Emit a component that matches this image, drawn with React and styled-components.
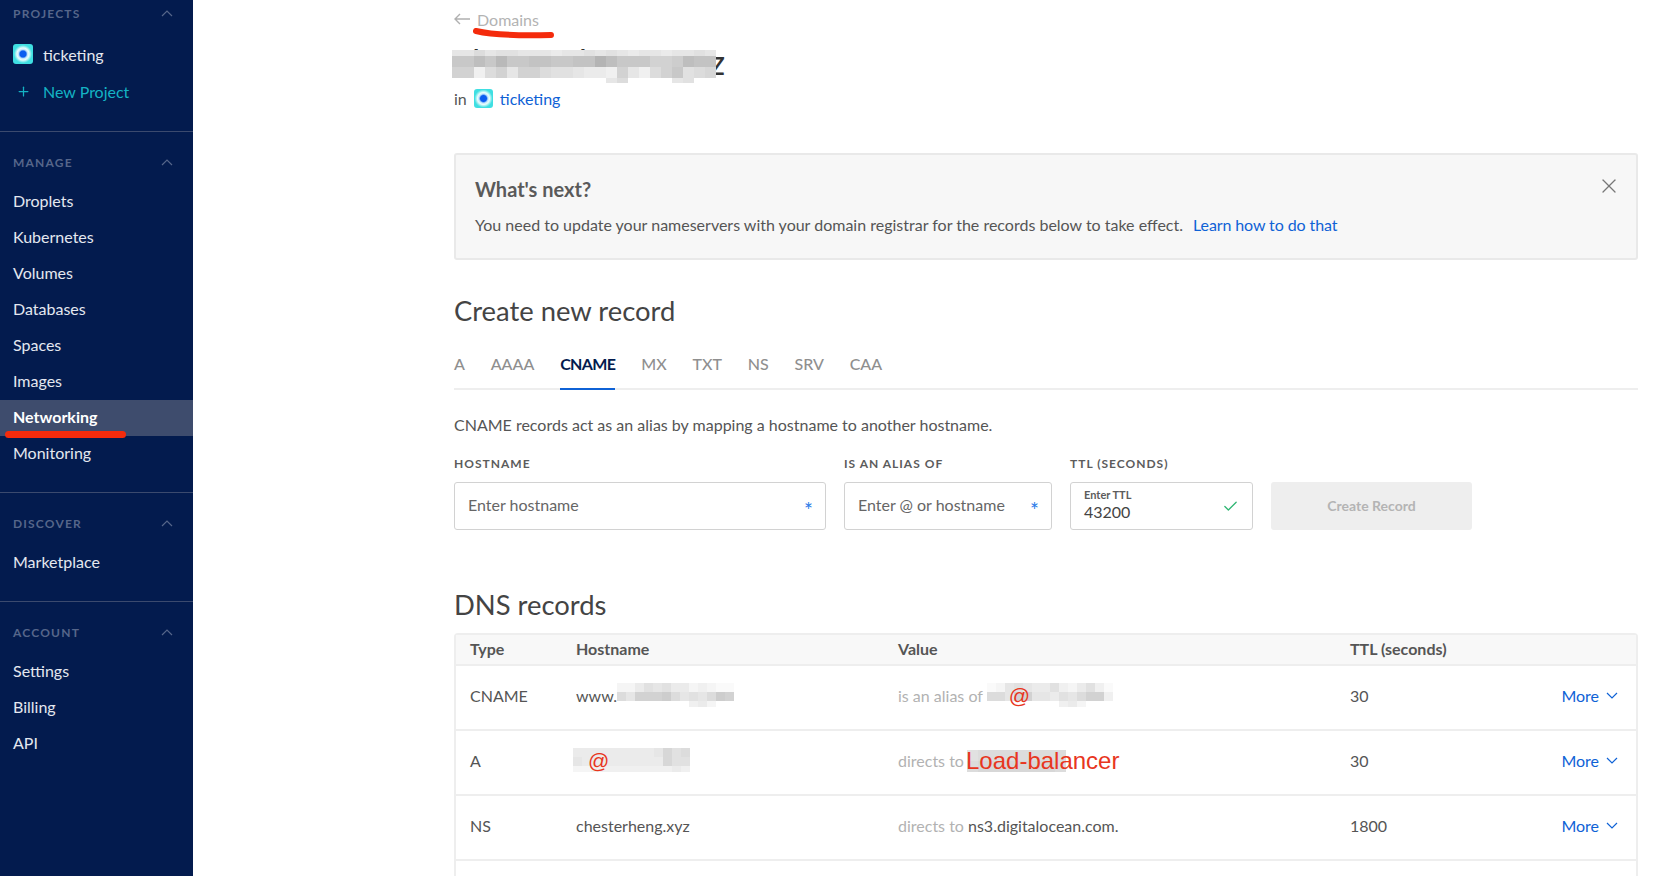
import React from 'react';
import styled, { createGlobalStyle } from 'styled-components';
import { Check, Plus, X } from 'lucide-react';

const GlobalStyle = createGlobalStyle`
html, body {
  margin: 0;
  height: 100%;
  overflow: hidden;
  background: #fff;
  font-family: Lato, "Open Sans", sans-serif;
}
* { box-sizing: border-box; }
`;

const Page = styled.div`
display: flex;
height: 876px;
overflow: hidden;
`;

const Sidebar = styled.aside`
width: 193px;
flex: none;
background: #031b4e;
color: #e4e8f0;
`;

const NavSection = styled.section`
padding: ${props => (props.first ? '0' : '16px')} 0 20px;
border-bottom: ${props => (props.last ? 'none' : '1px solid #3b4a6e')};
`;

const NavHeading = styled.div`
display: flex;
align-items: center;
justify-content: space-between;
height: ${props => (props.first ? '26px' : '28px')};
padding: 0 20px 0 13px;
margin-bottom: ${props => (props.first ? '12px' : '8px')};
font-size: 12px;
font-weight: 700;
letter-spacing: 1.2px;
color: #56668a;
`;

const NavItem = styled.div`
display: flex;
align-items: center;
gap: 10px;
height: 36px;
padding: 0 0 4px 13px;
margin-top: ${props => (props.teal ? '1px' : '0')};
font-size: 16px;
font-weight: ${props => (props.active ? 700 : 400)};
color: ${props => (props.active ? '#fff' : props.teal ? '#14b3c4' : '#e4e8f0')};
background: ${props => (props.active ? '#3e4c6d' : 'transparent')};
position: relative;
`;

const ProjectIcon = styled.span`
display: inline-block;
flex: none;
width: ${props => (props.small ? '19px' : '20px')};
height: ${props => (props.small ? '19px' : '20px')};
border-radius: 3px;
background: radial-gradient(circle, #0a5cf0 0 3px, #bfe4fb 4.5px, #eafcfd 6px, #3fdfe2 9px);
`;

const PlusMark = styled.span`
display: flex;
justify-content: center;
width: 20px;
`;

const RedStroke = styled.span`
position: absolute;
left: 5px;
top: 31px;
width: 121px;
height: 7px;
border-radius: 4px;
background: #f42b0c;
`;

const Main = styled.main`
flex: 1;
padding: 0 15px 0 261px;
min-width: 0;
color: #4b4b4b;
`;

const BackLink = styled.div`
position: relative;
display: flex;
align-items: center;
gap: 7px;
height: 38px;
font-size: 16px;
color: #b3b3b3;
`;

const TitleWrap = styled.div`
position: relative;
height: 44px;
padding-top: 2px;
font-size: 34px;
line-height: 44px;
letter-spacing: 2.1px;
color: #333;
white-space: nowrap;
`;

const Overlay = styled.span`
position: absolute;
left: ${props => props.left};
top: ${props => props.top};
display: block;
line-height: 0;
`;

const InLine = styled.div`
display: flex;
align-items: center;
gap: 7px;
height: 33px;
font-size: 16px;
color: #555;
`;

const BlueLink = styled.a`
color: #0f62d6;
text-decoration: none;
`;

const Notice = styled.div`
position: relative;
height: 107px;
margin-top: 38px;
padding: 20px 19px 0;
background: #f7f7f7;
border: 2px solid #e9e9e9;
border-radius: 3px;
`;

const NoticeTitle = styled.h3`
margin: 0;
font-size: 20px;
line-height: 28px;
font-weight: 700;
color: #5a5a5a;
`;

const NoticeBody = styled.p`
margin: 10px 0 0;
font-size: 16px;
line-height: 24px;
color: #555;
white-space: nowrap;
`;

const NoticeLink = styled(BlueLink)`
margin-left: 10px;
letter-spacing: -0.1px;
`;

const CloseButton = styled.span`
position: absolute;
right: 15px;
top: 19px;
color: #777;
line-height: 0;
`;

const SectionTitle = styled.h2`
margin: ${props => props.top} 0 0;
font-size: 27.4px;
line-height: 36px;
font-weight: 400;
color: #444;
`;

const Tabs = styled.div`
display: flex;
gap: 25.8px;
height: 48px;
margin-top: 13px;
border-bottom: 2px solid #eee;
`;

const Tab = styled.div`
height: 48px;
padding-top: 10px;
font-size: 16px;
line-height: 24px;
font-weight: ${props => (props.active ? 700 : 500)};
letter-spacing: ${props => (props.active ? '-0.6px' : '0')};
color: ${props => (props.active ? '#031b4e' : '#8f8f8f')};
border-bottom: 2px solid ${props => (props.active ? '#0f62d6' : 'transparent')};
`;

const Hint = styled.p`
margin: 23px 0 0;
font-size: 16px;
line-height: 24px;
color: #555;
`;

const FormRow = styled.div`
display: flex;
gap: 18px;
margin-top: 19px;
align-items: flex-end;
`;

const Field = styled.div`
width: ${props => props.width};
`;

const FieldLabel = styled.div`
height: 20px;
margin-bottom: 6px;
font-size: 12px;
line-height: 16px;
font-weight: 700;
letter-spacing: 1px;
color: #5c5c5c;
`;

const InputBox = styled.div`
position: relative;
display: flex;
align-items: center;
justify-content: space-between;
height: 48px;
padding: 0 13px 3px;
border: 1px solid #d2d2d2;
border-radius: 3px;
font-size: 16px;
color: #666;
`;

const Required = styled.span`
color: #2a7ae8;
font-size: 21px;
line-height: 16px;
margin: 11px -1px 0 0;
`;

const ValidMark = styled(Check)`
margin-top: 3px;
`;

const TtlValue = styled.div`
display: flex;
flex-direction: column;
color: #444;
font-size: 16px;
line-height: 19px;
`;

const TtlCaption = styled.span`
font-size: 11px;
line-height: 14px;
font-weight: 700;
color: #5c5c5c;
`;

const SubmitButton = styled.button`
width: 201px;
height: 48px;
padding-bottom: 2px;
border: none;
border-radius: 3px;
background: #eee;
color: #b4b4b4;
font-family: inherit;
font-size: 14px;
font-weight: 700;
`;

const Table = styled.div`
margin-top: 10px;
border: 2px solid #eee;
border-bottom: none;
border-radius: 4px 4px 0 0;
`;

const Row = styled.div`
display: grid;
grid-template-columns: 106px 322px 452px 1fr auto;
align-items: center;
height: ${props => (props.head ? '31px' : '65px')};
padding: 0 18px ${props => (props.head ? '3px' : '5px')} 14px;
border-bottom: 2px solid #eee;
background: ${props => (props.head ? '#f8f8f8' : '#fff')};
font-size: 16px;
font-weight: ${props => (props.head ? 700 : 400)};
color: #555;
white-space: nowrap;
`;

const Cell = styled.div`
display: flex;
align-items: center;
white-space: pre;
`;

const Muted = styled.span`
color: #b2b2b2;
`;

const MoreLink = styled(BlueLink)`
display: flex;
align-items: center;
gap: 7px;
`;

const MaskedValue = styled.span`
position: relative;
display: inline-block;
margin-left: ${props => props.shift || '0'};
line-height: 0;
`;

const RedAt = styled.span`
position: absolute;
left: ${props => props.left};
top: ${props => props.top};
font-family: "Liberation Sans", Arial, sans-serif;
font-size: 21px;
line-height: 24px;
color: #e8361e;
`;

const RedLabel = styled.span`
position: relative;
top: ${props => props.nudge || '0'};
margin-left: -1px;
font-family: "Liberation Sans", Arial, sans-serif;
font-size: 24px;
line-height: 28px;
color: #e8361e;
`;

// grey mosaics standing in for the redacted parts of the screenshot
const Mosaic = ({ rows, cell = 11, offset = 0, height }) => {
    const width = rows[0].length * cell;
    return (
        <svg width={width} height={height} viewBox={`0 ${offset} ${width} ${height}`} shapeRendering="crispEdges">
            {rows.map((row, y) => row.split('').map((c, x) => {
                const v = 0xb4 + parseInt(c, 16) * 5;
                return <rect key={`${x}-${y}`} x={x * cell} y={y * cell} width={cell} height={cell} fill={`rgb(${v},${v},${v})`} />;
            }))}
        </svg>
    );
};

const Chevron = ({ down }) => (
    <svg width="12" height="7" viewBox="0 0 12 7" fill="none" stroke="currentColor" strokeWidth="1.2">
        <path d={down ? 'M1 1l5 5 5-5' : 'M1 6l5-5 5 5'} />
    </svg>
);

const BackArrow = () => (
    <svg width="16" height="12" viewBox="0 0 16 12" fill="none" stroke="#b0b0b0" strokeWidth="1.4">
        <path d="M16 6H1M6 1L1 6l5 5" />
    </svg>
);

const HandUnderline = () => (
    <svg width="84" height="12" viewBox="0 0 84 12" fill="none" stroke="#f42b0c" strokeWidth="6" strokeLinecap="round">
        <path d="M3 3C20 7 40 8 78 7" />
    </svg>
);

const manage = ['Droplets', 'Kubernetes', 'Volumes', 'Databases', 'Spaces', 'Images', 'Networking', 'Monitoring'];
const tabs = ['A', 'AAAA', 'CNAME', 'MX', 'TXT', 'NS', 'SRV', 'CAA'];

const titleMosaic = [
    'aa8a99aaabaa9a9abaabaa9a',
    '442414433443302444665233',
    '66c86a66899abbc6ac864987',
    'ffffffffffffffa8ffffa9ff',
];
const wwwMosaic = ['ddb9a9bbdcdee', '8a66658a9a856', 'ffffffffcbdff'];
const aliasMosaic = ['eda9abb9cdb9ce', '88a66aab9a866c', 'ffffffffcbdfff'];
const atMosaic = ['bbbbbbbbba798', 'abbbbbbbbb799', 'ddcccccccccbc'];
const loadMosaic = ['988888888', '877777778'];

const App = () => (
    <Page>
        <GlobalStyle />
        <Sidebar>
            <NavSection first>
                <NavHeading first>PROJECTS <Chevron /></NavHeading>
                <NavItem><ProjectIcon />ticketing</NavItem>
                <NavItem teal><PlusMark><Plus size={15} strokeWidth={2} /></PlusMark>New Project</NavItem>
            </NavSection>
            <NavSection>
                <NavHeading>MANAGE <Chevron /></NavHeading>
                {manage.map(name => (
                    <NavItem key={name} active={name === 'Networking'}>
                        {name}
                        {name === 'Networking' && <RedStroke />}
                    </NavItem>
                ))}
            </NavSection>
            <NavSection>
                <NavHeading>DISCOVER <Chevron /></NavHeading>
                <NavItem>Marketplace</NavItem>
            </NavSection>
            <NavSection last>
                <NavHeading>ACCOUNT <Chevron /></NavHeading>
                <NavItem>Settings</NavItem>
                <NavItem>Billing</NavItem>
                <NavItem>API</NavItem>
            </NavSection>
        </Sidebar>
        <Main>
            <BackLink>
                <BackArrow />Domains
                <Overlay left="19px" top="28px"><HandUnderline /></Overlay>
            </BackLink>
            <TitleWrap>
                chesterheng.xyz
                <Overlay left="-2px" top="12px"><Mosaic rows={titleMosaic} height={33} offset={5} /></Overlay>
            </TitleWrap>
            <InLine>in <ProjectIcon small /><BlueLink>ticketing</BlueLink></InLine>
            <Notice>
                <NoticeTitle>What's next?</NoticeTitle>
                <NoticeBody>
                    You need to update your nameservers with your domain registrar for the records below to take effect.
                    <NoticeLink>Learn how to do that</NoticeLink>
                </NoticeBody>
                <CloseButton><X size={24} strokeWidth={1.3} /></CloseButton>
            </Notice>
            <SectionTitle top="33px">Create new record</SectionTitle>
            <Tabs>
                {tabs.map(tab => <Tab key={tab} active={tab === 'CNAME'}>{tab}</Tab>)}
            </Tabs>
            <Hint>CNAME records act as an alias by mapping a hostname to another hostname.</Hint>
            <FormRow>
                <Field width="372px">
                    <FieldLabel>HOSTNAME</FieldLabel>
                    <InputBox>Enter hostname<Required>*</Required></InputBox>
                </Field>
                <Field width="208px">
                    <FieldLabel>IS AN ALIAS OF</FieldLabel>
                    <InputBox>Enter @ or hostname<Required>*</Required></InputBox>
                </Field>
                <Field width="183px">
                    <FieldLabel>TTL (SECONDS)</FieldLabel>
                    <InputBox>
                        <TtlValue><TtlCaption>Enter TTL</TtlCaption>43200</TtlValue>
                        <ValidMark size={17} color="#2fb673" strokeWidth={1.8} />
                    </InputBox>
                </Field>
                <SubmitButton disabled>Create Record</SubmitButton>
            </FormRow>
            <SectionTitle top="57px">DNS records</SectionTitle>
            <Table>
                <Row head><span>Type</span><span>Hostname</span><span>Value</span><span>TTL (seconds)</span><span /></Row>
                <Row>
                    <span>CNAME</span>
                    <Cell>www.<MaskedValue><Mosaic rows={wwwMosaic} cell={9} height={24} /></MaskedValue></Cell>
                    <Cell>
                        <Muted>is an alias of </Muted>
                        <MaskedValue>
                            <Mosaic rows={aliasMosaic} cell={9} height={24} />
                            <RedAt left="22px" top="1px">@</RedAt>
                        </MaskedValue>
                    </Cell>
                    <span>30</span>
                    <MoreLink>More <Chevron down /></MoreLink>
                </Row>
                <Row>
                    <span>A</span>
                    <Cell>
                        <MaskedValue shift="-3px">
                            <Mosaic rows={atMosaic} cell={9} height={24} />
                            <RedAt left="15px" top="1px">@</RedAt>
                        </MaskedValue>
                    </Cell>
                    <Cell>
                        <Muted>directs to </Muted>
                        <RedLabel nudge="1px">
                            <Overlay left="0" top="3px"><Mosaic rows={loadMosaic} cell={11} height={22} /></Overlay>
                            <RedLabel>Load-balancer</RedLabel>
                        </RedLabel>
                    </Cell>
                    <span>30</span>
                    <MoreLink>More <Chevron down /></MoreLink>
                </Row>
                <Row>
                    <span>NS</span>
                    <span>chesterheng.xyz</span>
                    <span><Muted>directs to </Muted>ns3.digitalocean.com.</span>
                    <span>1800</span>
                    <MoreLink>More <Chevron down /></MoreLink>
                </Row>
                <Row />
            </Table>
        </Main>
    </Page>
);

export default App;
